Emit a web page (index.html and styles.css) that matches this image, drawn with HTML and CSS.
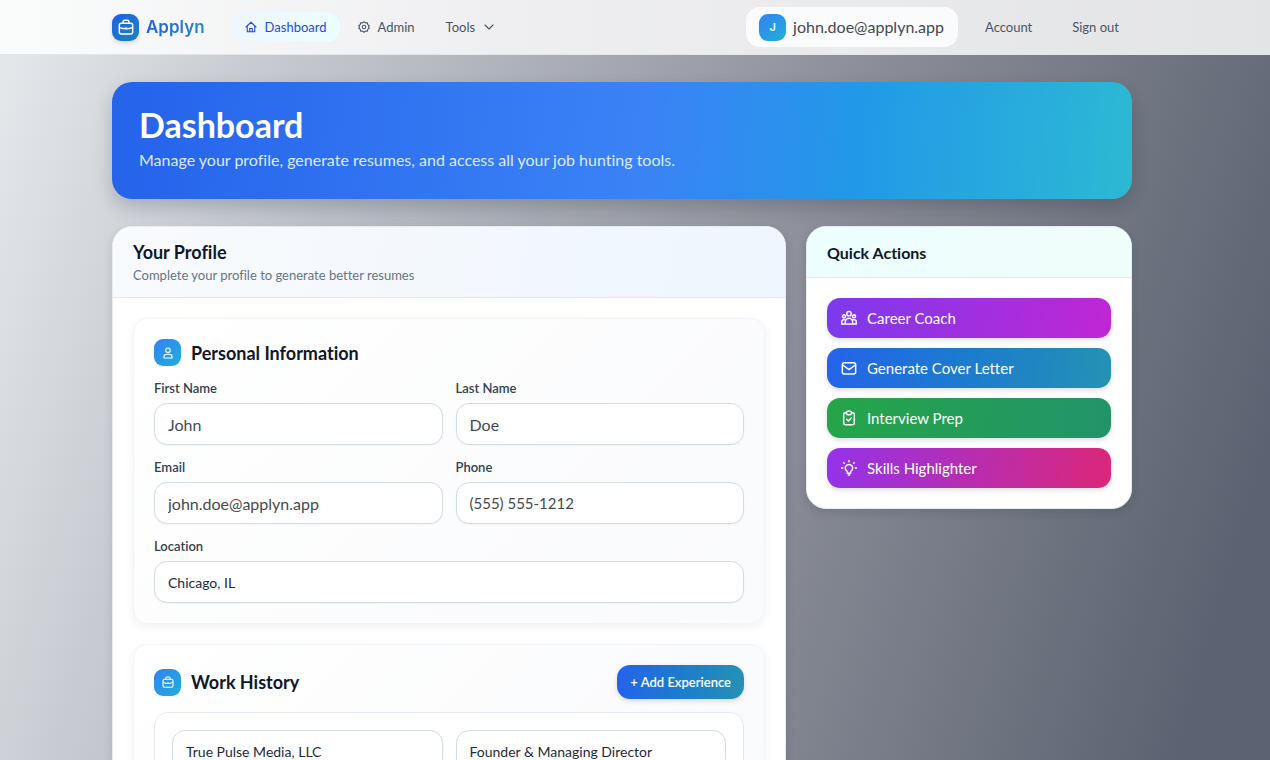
FILE: index.html
```html
<!DOCTYPE html>
<html lang="en">
<head>
<meta charset="utf-8">
<meta name="viewport" content="width=device-width, initial-scale=1">
<title>Applyn – Dashboard</title>
<link rel="stylesheet" href="styles.css">
</head>
<body>
<svg class="sprite" aria-hidden="true">
  <symbol id="i-brief" viewBox="0 0 24 24"><rect x="2" y="6.500" width="20" height="16" rx="3"/><path d="M7.500 6.500V4.500a2.500 2.500 0 0 1 2.500-2.500h4a2.500 2.500 0 0 1 2.500 2.500v2M2.500 13q9.500 3.500 19 0M12 13v2"/></symbol>
  <symbol id="i-home" viewBox="0 0 24 24"><path d="M2 12 12 2.500 22 12M4.500 10v11.500h15V10M9.500 21.500V15h5v6.500"/></symbol>
  <symbol id="i-gear" viewBox="0 0 24 24"><path d="m12 1.500 3 2.300 3.800-.3.700 3.700 3 2.300L21 12l1.500 2.500-3 2.300-.7 3.700-3.800-.3-3 2.300-3-2.300-3.800.3-.7-3.700-3-2.300L3 12 1.500 9.500l3-2.300.7-3.700 3.800.3z"/><circle cx="12" cy="12" r="3.500"/></symbol>
  <symbol id="i-down" viewBox="0 0 24 24"><path d="m4 8 8 8 8-8"/></symbol>
  <symbol id="i-user" viewBox="0 0 24 24"><circle cx="12" cy="6.500" r="4.500"/><path d="M4 22v-2c0-3 2-5.500 5-5.500h6c3 0 5 2.500 5 5.500v2z"/></symbol>
  <symbol id="i-team" viewBox="0 0 24 24"><circle cx="12" cy="5.500" r="3.300"/><circle cx="4.500" cy="9.500" r="2.300"/><circle cx="19.500" cy="9.500" r="2.300"/><path d="M6.500 21v-3a5.500 5.500 0 0 1 11 0v3zM6 14.500c-3-.5-5 1-5 4V21h5.500M18 14.500c3-.5 5 1 5 4V21h-5.500"/></symbol>
  <symbol id="i-mail" viewBox="0 0 24 24"><rect x="2" y="4" width="20" height="17" rx="3"/><path d="m2.500 7.500 9.500 7 9.500-7"/></symbol>
  <symbol id="i-clip" viewBox="0 0 24 24"><path d="M8 4H6.500A2.500 2.500 0 0 0 4 6.500v13A2.500 2.500 0 0 0 6.500 22h11a2.500 2.500 0 0 0 2.500-2.500v-13A2.500 2.500 0 0 0 17.500 4H16"/><path d="M8 4.500a4 3 0 0 1 8 0L14.500 7h-5zM8.500 14l2.500 2.500 4.500-4.500"/></symbol>
  <symbol id="i-bulb" viewBox="0 0 24 24"><path d="M9.500 17a5.500 5.500 0 1 1 5 0V20h-5zM11 22.500h2M12 1v1.500M4 4l1 1M20 4l-1 1M1 12h1.500M21.500 12H23"/></symbol>
</svg>

<header class="topbar">
  <div class="container topbar-row">
    <a class="brand" href="#"><span class="brand-mark"><svg class="icon"><use href="#i-brief"/></svg></span><span class="brand-name">Applyn</span></a>
    <nav class="nav" aria-label="Main">
      <a class="nav-link is-active" href="#"><svg class="icon"><use href="#i-home"/></svg>Dashboard</a>
      <a class="nav-link" href="#"><svg class="icon"><use href="#i-gear"/></svg>Admin</a>
      <button class="nav-link" type="button">Tools<svg class="icon"><use href="#i-down"/></svg></button>
    </nav>
    <div class="account">
      <div class="user-chip"><span class="avatar">J</span><span>john.doe@applyn.app</span></div>
      <a class="account-link" href="#">Account</a>
      <button class="account-link" type="button">Sign out</button>
    </div>
  </div>
</header>

<main class="container main">
  <section class="hero">
    <h1>Dashboard</h1>
    <p>Manage your profile, generate resumes, and access all your job hunting tools.</p>
  </section>

  <div class="columns">
    <section class="panel">
      <header class="panel-head">
        <h2>Your Profile</h2>
        <p>Complete your profile to generate better resumes</p>
      </header>
      <form class="panel-body">
        <section class="card">
          <div class="card-head"><span class="badge"><svg class="icon"><use href="#i-user"/></svg></span><h3>Personal Information</h3></div>
          <div class="fields">
            <div class="field"><label for="first">First Name</label><input class="input" id="first" type="text" value="John"></div>
            <div class="field"><label for="last">Last Name</label><input class="input" id="last" type="text" value="Doe"></div>
            <div class="field"><label for="email">Email</label><input class="input" id="email" type="email" value="john.doe@applyn.app"></div>
            <div class="field"><label for="phone">Phone</label><input class="input" id="phone" type="tel" value="(555) 555-1212"></div>
            <div class="field field-wide"><label for="location">Location</label><input class="input input-alt" id="location" type="text" value="Chicago, IL"></div>
          </div>
        </section>
        <section class="card">
          <div class="card-head card-head-job"><span class="badge"><svg class="icon"><use href="#i-brief"/></svg></span><h3>Work History</h3><button class="add" type="button">+ Add Experience</button></div>
          <div class="job">
            <input class="input input-alt" type="text" aria-label="Company" value="True Pulse Media, LLC">
            <input class="input input-alt" type="text" aria-label="Job title" value="Founder &amp; Managing Director">
          </div>
        </section>
      </form>
    </section>

    <aside class="panel">
      <header class="panel-head panel-head-mint"><h2>Quick Actions</h2></header>
      <div class="actions">
        <a class="action action-coach" href="#"><svg class="icon"><use href="#i-team"/></svg>Career Coach</a>
        <a class="action action-letter" href="#"><svg class="icon"><use href="#i-mail"/></svg>Generate Cover Letter</a>
        <a class="action action-prep" href="#"><svg class="icon"><use href="#i-clip"/></svg>Interview Prep</a>
        <a class="action action-skills" href="#"><svg class="icon"><use href="#i-bulb"/></svg>Skills Highlighter</a>
      </div>
    </aside>
  </div>
</main>
</body>
</html>
```
FILE: styles.css
```css
* { box-sizing: border-box; }
body {
  margin: 0;
  min-height: 100vh;
  font-family: Lato, "Open Sans", sans-serif;
  font-variant-ligatures: none;
  color: #0f172a;
  background: linear-gradient(106deg, #e6eaed 0%, #c8ccd2 18%, #8b8e98 60%, #5c6271 94%) fixed;
}
h1, h2, h3, p { margin: 0; }
a { color: inherit; text-decoration: none; }
button { font: inherit; color: inherit; border: 0; background: none; padding: 0; cursor: pointer; }
.sprite { position: absolute; width: 0; height: 0; }
.icon { width: 16px; height: 16px; flex: none; fill: none; stroke: currentColor; stroke-width: 2.200; stroke-linecap: round; stroke-linejoin: round; }

.container { width: 100%; max-width: 1074px; margin: 0 auto; padding: 0 40px 0 14px; }

.topbar { background: linear-gradient(90deg, #fafbfb, #efeff1 40%, #e3e4e6); border-bottom: 1px solid #e2e5ea; }
.topbar-row { display: flex; align-items: center; height: 54px; }
.brand { display: flex; align-items: center; gap: 7px; }
.brand-mark { display: grid; place-items: center; width: 27px; height: 27px; border-radius: 9px; color: #fff; background: linear-gradient(135deg, #1b5fe8, #1f84bd); box-shadow: 0 2px 4px rgba(15, 23, 42, .15); }
.brand-name { font: 600 17px/24px Inter, sans-serif; background: linear-gradient(90deg, #2060ea, #2389b9); background-clip: text; -webkit-background-clip: text; color: transparent; }
.nav { display: flex; align-items: center; gap: 5px; margin-left: 27px; }
.nav-link { display: flex; align-items: center; gap: 8px; height: 30px; padding: 0 13px; border-radius: 14px; font-size: 13px; line-height: 20px; color: #475569; }
.nav-link .icon { width: 12px; height: 12px; }
.is-active { color: #1d4ed8; background: linear-gradient(90deg, #eff6ff, #ecfeff); }
.account { display: flex; align-items: center; margin-left: auto; }
.user-chip { display: flex; align-items: center; gap: 7px; height: 40px; padding: 0 14px 0 13px; border-radius: 14px; background: #fafbfd; font-size: 16px; line-height: 24px; color: #45494f; }
.avatar { display: grid; place-items: center; width: 27px; height: 27px; border-radius: 9px; font: 600 11px/16px Inter, sans-serif; color: #fff; background: linear-gradient(135deg, #3480f5, #1fb0d8); }
.account-link { padding: 5px 13px; margin-left: 14px; font-size: 13px; line-height: 20px; color: #475569; }

.main { padding-top: 27px; padding-bottom: 27px; }
.hero { padding: 24px 27px 28px; border-radius: 20px; color: #fff; background: linear-gradient(95deg, #2563eb 0%, #3b82f6 52%, #2299e8 73%, #2cb9d3 100%); box-shadow: 0 8px 18px rgba(15, 23, 42, .2); }
.hero h1 { font-size: 34px; line-height: 38px; font-weight: 700; }
.hero p { margin-top: 4px; font-size: 16px; line-height: 23px; color: #dbeafe; }

.columns { display: grid; grid-template-columns: minmax(0, 674fr) minmax(0, 326fr); gap: 20px; align-items: start; margin-top: 27px; }
.panel { overflow: hidden; border-radius: 20px; background: #fff; border: 1px solid #e8ecf2; box-shadow: 0 4px 10px rgba(15, 23, 42, .12); }
.panel-head { padding: 14px 20px 11px; border-bottom: 1px solid #e2e8f0; background: linear-gradient(100deg, #f8fafc, #eff6ff); }
.panel-head h2 { font-size: 18px; line-height: 23px; font-weight: 700; }
.panel-head p { font-size: 13px; line-height: 21px; margin-top: 1px; color: #64748b; }
.panel-head-mint { padding-bottom: 13px; background: linear-gradient(100deg, #ecfeff, #f0fdfa); }
.panel-head-mint h2 { font-size: 16px; }
.panel-body { display: grid; gap: 20px; padding: 20px; }
.card { padding: 20px; border-radius: 14px; border: 1px solid #f1f5f9; background: linear-gradient(135deg, #fff, #f9fafc); box-shadow: 0 3px 10px rgba(15, 23, 42, .06); }
.card-head { display: flex; align-items: center; gap: 10px; }
.card-head h3 { font-size: 18px; line-height: 26px; font-weight: 700; }
.card-head-job { min-height: 34px; }
.badge { display: grid; place-items: center; width: 27px; height: 27px; border-radius: 9px; color: #fff; background: linear-gradient(135deg, #3480f5, #1fb0d8); }
.badge .icon { width: 12px; height: 12px; }
.fields { display: grid; grid-template-columns: 1fr 1fr; gap: 13px; margin-top: 13px; }
.field { display: flex; flex-direction: column; gap: 5px; min-width: 0; }
.field-wide { grid-column: 1 / -1; }
.field label { font-size: 13px; line-height: 19px; font-weight: 600; color: #334155; }
.input { width: 100%; min-width: 0; height: 42px; padding: 0 13px; border: 1px solid #d3dbe7; border-radius: 13px; background: #fff; font: 400 16px/22px Lato, sans-serif; color: #45494f; box-shadow: 0 1px 2px rgba(15, 23, 42, .04); }
.input[type="tel"] { font-size: 15px; }
.input-alt { font-size: 14px; color: #1e293b; }
.add { margin-left: auto; height: 34px; padding: 0 13px; border-radius: 13px; color: #fff; font-size: 13px; line-height: 20px; font-weight: 600; background: linear-gradient(90deg, #2563eb, #1c7ad0 45%, #2492b3); box-shadow: 0 2px 5px rgba(15, 23, 42, .15); }
.job { display: grid; grid-template-columns: 1fr 1fr; gap: 13px; margin-top: 13px; padding: 17px; border: 1px solid #e5eaf2; border-radius: 14px; background: #fff; }

.actions { display: grid; gap: 10px; padding: 20px; }
.action { display: flex; align-items: center; gap: 10px; height: 40px; padding: 0 14px; border-radius: 13px; color: #fff; font-size: 15px; line-height: 22px; box-shadow: 0 2px 5px rgba(15, 23, 42, .15); }
.action-coach { background: linear-gradient(100deg, #7c3aed, #c026d3); }
.action-letter { background: linear-gradient(100deg, #2563eb, #1c7ad0 45%, #2492b3); }
.action-prep { background: linear-gradient(100deg, #25a548, #22936b); }
.action-skills { background: linear-gradient(100deg, #9333ea, #db2777); }
```
